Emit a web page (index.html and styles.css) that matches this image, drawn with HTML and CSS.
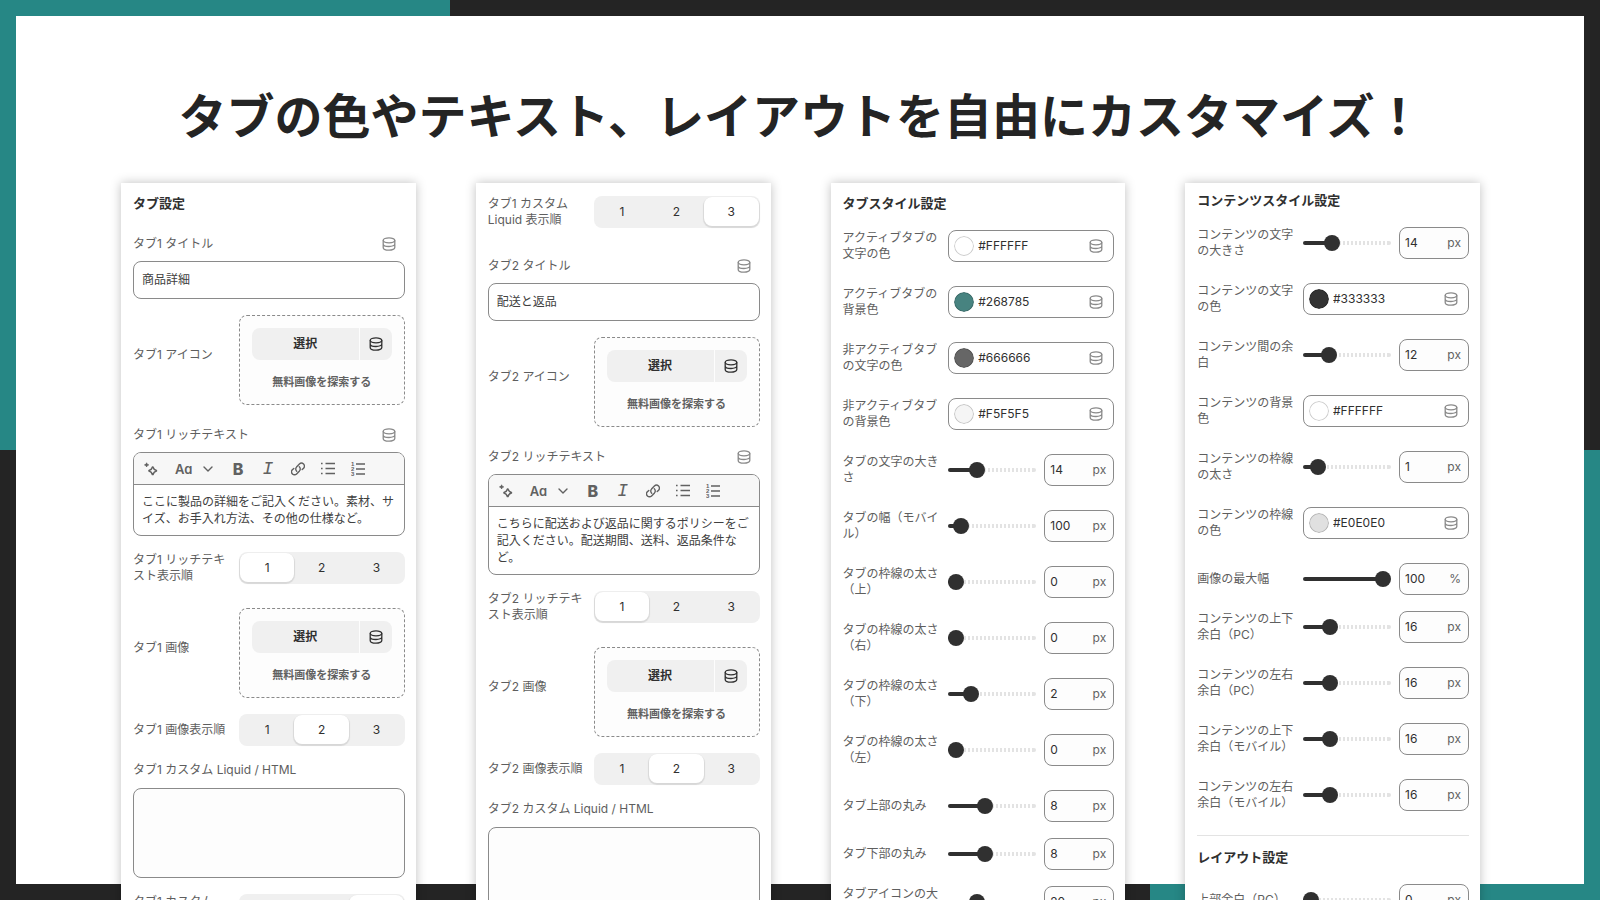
FILE: index.html
```html
<!DOCTYPE html>
<html lang="ja">
<head>
<meta charset="utf-8">
<meta name="viewport" content="width=device-width, initial-scale=1">
<title>タブの色やテキスト、レイアウトを自由にカスタマイズ！</title>
<link rel="stylesheet" href="styles.css">
</head>
<body>
<svg class="sprite" aria-hidden="true">
  <symbol id="db" viewBox="0 0 14 14"><g fill="none" stroke="currentColor" stroke-width="1.3"><ellipse cx="7" cy="3.3" rx="5.8" ry="2.5"/><path d="M1.2 3.300v7.200c0 1.500 2.500 2.700 5.800 2.700s5.800-1.200 5.800-2.700v-7.200M1.200 6.900c0 1.500 2.500 2.600 5.800 2.600s5.800-1.100 5.800-2.600"/></g></symbol>
  <symbol id="sparkle" viewBox="0 0 14 14"><path d="M9 5.100c.5 1.900 1.500 2.900 3.400 3.400v.6c-1.900.5-2.900 1.500-3.400 3.400h-.6c-.5-1.900-1.500-2.900-3.400-3.400v-.6c1.900-.5 2.900-1.500 3.400-3.400z" fill="none" stroke="currentColor" stroke-width="1.600" stroke-linejoin="round"/><path d="M2.600.8l.6 1.500 1.500.6-1.500.6-.6 1.500-.6-1.500-1.500-.6 1.500-.6z" fill="currentColor" stroke="currentColor" stroke-width=".8"/></symbol>
  <symbol id="chevron" viewBox="0 0 10 10"><path d="M1 3l4 4 4-4" fill="none" stroke="currentColor" stroke-width="1.400" stroke-linecap="round" stroke-linejoin="round"/></symbol>
  <symbol id="link" viewBox="0 0 14 14"><g fill="none" stroke="currentColor" stroke-width="1.400" stroke-linecap="round"><path d="M5.700 9.200a2.900 2.900 0 0 1-.2-4.100l2.900-3a2.900 2.900 0 0 1 4.200 4.100l-1.400 1.400"/><path d="M8.300 4.800a2.900 2.900 0 0 1 .2 4.100l-2.900 3a2.900 2.900 0 0 1-4.200-4.100l1.400-1.400"/></g></symbol>
  <symbol id="ul" viewBox="0 0 14 14"><path d="M4.500 1.500H14M4.500 6.500H14M4.500 11.500H14" stroke="currentColor" stroke-width="1.300"/><path d="M0 1.500h1.600M0 6.500h1.600M0 11.500h1.600" stroke="currentColor" stroke-width="1.500"/></symbol>
  <symbol id="ol" viewBox="0 0 14 16"><path d="M5 3H14M5 8H14M5 13H14" stroke="currentColor" stroke-width="1.400"/><g class="tiny"><text x="0" y="5">1</text><text x="0" y="10">2</text><text x="0" y="15">3</text></g></symbol>
</svg>
<main class="slide">
  <h1 class="slide-title">タブの色やテキスト、レイアウトを自由にカスタマイズ！</h1>
  <div class="panels">

    <section class="panel">
      <h2 class="heading">タブ設定</h2>
      <div class="field">
        <div class="field-head"><label for="t1">タブ1 タイトル</label><button class="ghost" aria-label="動的ソース"><svg class="icon"><use href="#db"/></svg></button></div>
        <input class="text" id="t1" value="商品詳細">
      </div>
      <div class="row media"><span class="label">タブ1 アイコン</span>
        <div class="picker"><div class="split"><button class="pick">選択</button><button class="source" aria-label="動的ソース"><svg class="icon"><use href="#db"/></svg></button></div><a class="explore" href="#">無料画像を探索する</a></div></div>
      <div class="field">
        <div class="field-head"><label for="r1">タブ1 リッチテキスト</label><button class="ghost" aria-label="動的ソース"><svg class="icon"><use href="#db"/></svg></button></div>
        <div class="editor">
          <div class="toolbar"><button class="tool" aria-label="自動生成"><svg class="icon"><use href="#sparkle"/></svg></button><button class="tool format">Aa<svg class="chevron"><use href="#chevron"/></svg></button><button class="tool bold">B</button><button class="tool italic">I</button><button class="tool" aria-label="リンク"><svg class="icon"><use href="#link"/></svg></button><button class="tool" aria-label="箇条書き"><svg class="icon"><use href="#ul"/></svg></button><button class="tool" aria-label="番号付きリスト"><svg class="icon tall-icon"><use href="#ol"/></svg></button></div>
          <textarea class="rich" id="r1" rows="2">ここに製品の詳細をご記入ください。素材、サイズ、お手入れ方法、その他の仕様など。</textarea>
        </div>
      </div>
      <div class="row tall"><span class="label">タブ1 リッチテキスト表示順</span>
        <div class="segments"><button class="segment active">1</button><button class="segment">2</button><button class="segment">3</button></div></div>
      <div class="row media"><span class="label">タブ1 画像</span>
        <div class="picker"><div class="split"><button class="pick">選択</button><button class="source" aria-label="動的ソース"><svg class="icon"><use href="#db"/></svg></button></div><a class="explore" href="#">無料画像を探索する</a></div></div>
      <div class="row"><span class="label">タブ1 画像表示順</span>
        <div class="segments"><button class="segment">1</button><button class="segment active">2</button><button class="segment">3</button></div></div>
      <div class="field"><label class="code-label" for="c1">タブ1 カスタム Liquid / HTML</label><textarea class="code" id="c1"></textarea></div>
      <div class="row tall"><span class="label">タブ1 カスタム Liquid 表示順</span>
        <div class="segments"><button class="segment">1</button><button class="segment">2</button><button class="segment active">3</button></div></div>
    </section>

    <section class="panel panel-rows">
      <div class="row tall"><span class="label">タブ1 カスタム Liquid 表示順</span>
        <div class="segments"><button class="segment">1</button><button class="segment">2</button><button class="segment active">3</button></div></div>
      <div class="field">
        <div class="field-head"><label for="t2">タブ2 タイトル</label><button class="ghost" aria-label="動的ソース"><svg class="icon"><use href="#db"/></svg></button></div>
        <input class="text" id="t2" value="配送と返品">
      </div>
      <div class="row media"><span class="label">タブ2 アイコン</span>
        <div class="picker"><div class="split"><button class="pick">選択</button><button class="source" aria-label="動的ソース"><svg class="icon"><use href="#db"/></svg></button></div><a class="explore" href="#">無料画像を探索する</a></div></div>
      <div class="field">
        <div class="field-head"><label for="r2">タブ2 リッチテキスト</label><button class="ghost" aria-label="動的ソース"><svg class="icon"><use href="#db"/></svg></button></div>
        <div class="editor">
          <div class="toolbar"><button class="tool" aria-label="自動生成"><svg class="icon"><use href="#sparkle"/></svg></button><button class="tool format">Aa<svg class="chevron"><use href="#chevron"/></svg></button><button class="tool bold">B</button><button class="tool italic">I</button><button class="tool" aria-label="リンク"><svg class="icon"><use href="#link"/></svg></button><button class="tool" aria-label="箇条書き"><svg class="icon"><use href="#ul"/></svg></button><button class="tool" aria-label="番号付きリスト"><svg class="icon tall-icon"><use href="#ol"/></svg></button></div>
          <textarea class="rich" id="r2" rows="3">こちらに配送および返品に関するポリシーをご記入ください。配送期間、送料、返品条件など。</textarea>
        </div>
      </div>
      <div class="row tall"><span class="label">タブ2 リッチテキスト表示順</span>
        <div class="segments"><button class="segment active">1</button><button class="segment">2</button><button class="segment">3</button></div></div>
      <div class="row media"><span class="label">タブ2 画像</span>
        <div class="picker"><div class="split"><button class="pick">選択</button><button class="source" aria-label="動的ソース"><svg class="icon"><use href="#db"/></svg></button></div><a class="explore" href="#">無料画像を探索する</a></div></div>
      <div class="row"><span class="label">タブ2 画像表示順</span>
        <div class="segments"><button class="segment">1</button><button class="segment active">2</button><button class="segment">3</button></div></div>
      <div class="field"><label class="code-label" for="c2">タブ2 カスタム Liquid / HTML</label><textarea class="code" id="c2"></textarea></div>
    </section>

    <section class="panel">
      <h2 class="heading">タブスタイル設定</h2>
      <div class="row tall"><label class="label" for="k1">アクティブタブの文字の色</label>
        <div class="color"><input type="color" class="swatch" value="#ffffff" aria-label="色を選択"><input class="hex" id="k1" value="#FFFFFF"><button class="ghost" aria-label="動的ソース"><svg class="icon"><use href="#db"/></svg></button></div></div>
      <div class="row tall"><label class="label" for="k2">アクティブタブの背景色</label>
        <div class="color"><input type="color" class="swatch" value="#478380" aria-label="色を選択"><input class="hex" id="k2" value="#268785"><button class="ghost" aria-label="動的ソース"><svg class="icon"><use href="#db"/></svg></button></div></div>
      <div class="row tall"><label class="label" for="k3">非アクティブタブの文字の色</label>
        <div class="color"><input type="color" class="swatch" value="#666666" aria-label="色を選択"><input class="hex" id="k3" value="#666666"><button class="ghost" aria-label="動的ソース"><svg class="icon"><use href="#db"/></svg></button></div></div>
      <div class="row tall"><label class="label" for="k4">非アクティブタブの背景色</label>
        <div class="color"><input type="color" class="swatch" value="#f5f5f5" aria-label="色を選択"><input class="hex" id="k4" value="#F5F5F5"><button class="ghost" aria-label="動的ソース"><svg class="icon"><use href="#db"/></svg></button></div></div>
      <div class="row tall"><label class="label" for="n1">タブの文字の大きさ</label>
        <div class="slider"><input type="range" class="range" min="10" max="24" value="14" style="--fill:.286" aria-label="タブの文字の大きさ"><div class="number"><input id="n1" value="14"><span>px</span></div></div></div>
      <div class="row tall"><label class="label" for="n2">タブの幅（モバイル）</label>
        <div class="slider"><input type="range" class="range" min="80" max="360" value="100" style="--fill:.071" aria-label="タブの幅（モバイル）"><div class="number"><input id="n2" value="100"><span>px</span></div></div></div>
      <div class="row tall"><label class="label" for="n3">タブの枠線の太さ（上）</label>
        <div class="slider"><input type="range" class="range" max="10" value="0" style="--fill:0" aria-label="タブの枠線の太さ（上）"><div class="number"><input id="n3" value="0"><span>px</span></div></div></div>
      <div class="row tall"><label class="label" for="n4">タブの枠線の太さ（右）</label>
        <div class="slider"><input type="range" class="range" max="10" value="0" style="--fill:0" aria-label="タブの枠線の太さ（右）"><div class="number"><input id="n4" value="0"><span>px</span></div></div></div>
      <div class="row tall"><label class="label" for="n5">タブの枠線の太さ（下）</label>
        <div class="slider"><input type="range" class="range" max="10" value="2" style="--fill:.2" aria-label="タブの枠線の太さ（下）"><div class="number"><input id="n5" value="2"><span>px</span></div></div></div>
      <div class="row tall"><label class="label" for="n6">タブの枠線の太さ（左）</label>
        <div class="slider"><input type="range" class="range" max="10" value="0" style="--fill:0" aria-label="タブの枠線の太さ（左）"><div class="number"><input id="n6" value="0"><span>px</span></div></div></div>
      <div class="row"><label class="label" for="n7">タブ上部の丸み</label>
        <div class="slider"><input type="range" class="range" max="20" value="8" style="--fill:.4" aria-label="タブ上部の丸み"><div class="number"><input id="n7" value="8"><span>px</span></div></div></div>
      <div class="row"><label class="label" for="n8">タブ下部の丸み</label>
        <div class="slider"><input type="range" class="range" max="20" value="8" style="--fill:.4" aria-label="タブ下部の丸み"><div class="number"><input id="n8" value="8"><span>px</span></div></div></div>
      <div class="row tall"><label class="label" for="n9">タブアイコンの大きさ</label>
        <div class="slider"><input type="range" class="range" min="12" max="40" value="20" style="--fill:.286" aria-label="タブアイコンの大きさ"><div class="number"><input id="n9" value="20"><span>px</span></div></div></div>
    </section>

    <section class="panel panel-content">
      <h2 class="heading">コンテンツスタイル設定</h2>
      <div class="row tall"><label class="label" for="m1">コンテンツの文字の大きさ</label>
        <div class="slider"><input type="range" class="range" min="10" max="24" value="14" style="--fill:.286" aria-label="コンテンツの文字の大きさ"><div class="number"><input id="m1" value="14"><span>px</span></div></div></div>
      <div class="row tall"><label class="label" for="m2">コンテンツの文字の色</label>
        <div class="color"><input type="color" class="swatch" value="#333333" aria-label="色を選択"><input class="hex" id="m2" value="#333333"><button class="ghost" aria-label="動的ソース"><svg class="icon"><use href="#db"/></svg></button></div></div>
      <div class="row tall"><label class="label" for="m3">コンテンツ間の余白</label>
        <div class="slider"><input type="range" class="range" max="48" value="12" style="--fill:.25" aria-label="コンテンツ間の余白"><div class="number"><input id="m3" value="12"><span>px</span></div></div></div>
      <div class="row tall"><label class="label" for="m4">コンテンツの背景色</label>
        <div class="color"><input type="color" class="swatch" value="#ffffff" aria-label="色を選択"><input class="hex" id="m4" value="#FFFFFF"><button class="ghost" aria-label="動的ソース"><svg class="icon"><use href="#db"/></svg></button></div></div>
      <div class="row tall"><label class="label" for="m5">コンテンツの枠線の太さ</label>
        <div class="slider"><input type="range" class="range" max="10" value="1" style="--fill:.1" aria-label="コンテンツの枠線の太さ"><div class="number"><input id="m5" value="1"><span>px</span></div></div></div>
      <div class="row tall"><label class="label" for="m6">コンテンツの枠線の色</label>
        <div class="color"><input type="color" class="swatch" value="#e0e0e0" aria-label="色を選択"><input class="hex" id="m6" value="#E0E0E0"><button class="ghost" aria-label="動的ソース"><svg class="icon"><use href="#db"/></svg></button></div></div>
      <div class="row"><label class="label" for="m7">画像の最大幅</label>
        <div class="slider"><input type="range" class="range" max="100" value="100" style="--fill:1" aria-label="画像の最大幅"><div class="number"><input id="m7" value="100"><span>%</span></div></div></div>
      <div class="row tall"><label class="label" for="m8">コンテンツの上下余白（PC）</label>
        <div class="slider"><input type="range" class="range" max="60" value="16" style="--fill:.267" aria-label="コンテンツの上下余白（PC）"><div class="number"><input id="m8" value="16"><span>px</span></div></div></div>
      <div class="row tall"><label class="label" for="m9">コンテンツの左右余白（PC）</label>
        <div class="slider"><input type="range" class="range" max="60" value="16" style="--fill:.267" aria-label="コンテンツの左右余白（PC）"><div class="number"><input id="m9" value="16"><span>px</span></div></div></div>
      <div class="row tall"><label class="label" for="m10">コンテンツの上下余白（モバイル）</label>
        <div class="slider"><input type="range" class="range" max="60" value="16" style="--fill:.267" aria-label="コンテンツの上下余白（モバイル）"><div class="number"><input id="m10" value="16"><span>px</span></div></div></div>
      <div class="row tall"><label class="label" for="m11">コンテンツの左右余白（モバイル）</label>
        <div class="slider"><input type="range" class="range" max="60" value="16" style="--fill:.267" aria-label="コンテンツの左右余白（モバイル）"><div class="number"><input id="m11" value="16"><span>px</span></div></div></div>
      <h2 class="heading divided">レイアウト設定</h2>
      <div class="row"><label class="label" for="m12">上部余白（PC）</label>
        <div class="slider"><input type="range" class="range" max="100" value="0" style="--fill:0" aria-label="上部余白（PC）"><div class="number"><input id="m12" value="0"><span>px</span></div></div></div>
    </section>

  </div>
</main>
</body>
</html>
```
FILE: styles.css
```css
:root {
  --teal: #268785;
  --dark: #242424;
  --ink: #303030;
  --muted: #5e5e5e;
  --line: #8a8a8a;
  --soft: #f0f0f0;
}

* { box-sizing: border-box; }

body {
  margin: 0;
  height: 100vh;
  overflow: hidden;
  color: var(--ink);
  font-family: Inter, "Noto Sans CJK JP", sans-serif;
  font-size: 12px;
  line-height: 16px;
}

button, input, textarea {
  margin: 0;
  padding: 0;
  border: 0;
  background: none;
  color: inherit;
  font: inherit;
}

.sprite { display: none; }
.tiny { font: 700 6px "Liberation Sans", sans-serif; fill: currentColor; }

/* White sheet over a frame with two teal corners */
.slide {
  height: 100vh;
  overflow: hidden;
  padding: 77px 120px 0 121px;
  background:
    linear-gradient(#fff, #fff) 16px 16px / calc(100% - 32px) calc(100% - 32px) no-repeat,
    linear-gradient(var(--teal), var(--teal)) 0 0 / 450px 450px no-repeat,
    linear-gradient(var(--teal), var(--teal)) 100% 100% / 450px 450px no-repeat,
    var(--dark);
}

.slide-title {
  margin: 0 0 34px;
  color: #242424;
  font: 700 48px/72px "Noto Sans CJK JP", sans-serif;
  text-align: center;
  white-space: nowrap;
}

.panels {
  display: grid;
  grid-template-columns: repeat(4, minmax(0, 1fr));
  gap: 60px;
}

.panel {
  display: flex;
  flex-direction: column;
  gap: 16px;
  min-height: 760px;
  padding: 11px 11px 16px 12px;
  background: #fff;
  box-shadow: 0 0 10px rgba(0, 0, 0, .25);
}
.panel-rows { padding-top: 13px; }
.panel-content { padding-top: 8px; }

.heading { margin: 0; padding-bottom: 2px; font-size: 13px; font-weight: 700; line-height: 18px; }
.heading.divided { padding-top: 12px; border-top: 1px solid #e3e3e3; }

.row {
  display: grid;
  grid-template-columns: minmax(0, 1fr) 166px;
  gap: 6px;
  align-items: center;
}
.row.tall { padding-bottom: 8px; }
.row.media .label { padding-bottom: 11px; }
.label, .field-head label, .code-label { color: var(--muted); }

.field { display: flex; flex-direction: column; }
.field-head {
  display: flex;
  align-items: center;
  justify-content: space-between;
  height: 28px;
  margin-bottom: 3px;
  padding-right: 9px;
}
.code-label { margin-bottom: 10px; }

.icon { display: block; width: 14px; height: 14px; }
.tall-icon { height: 16px; }
.ghost { color: var(--line); }

.text {
  height: 38px;
  padding: 0 8px 3px;
  border: 1px solid var(--line);
  border-radius: 8px;
}
.text, .rich { color: #404040; }
.code {
  height: 90px;
  border: 1px solid var(--line);
  border-radius: 8px;
  background: #fdfdfd;
  resize: none;
}

.picker {
  display: flex;
  flex-direction: column;
  align-items: center;
  gap: 14px;
  height: 90px;
  padding: 12px;
  border: 1px dashed var(--line);
  border-radius: 8px;
  background: #fdfdfd;
}
.split { display: grid; grid-template-columns: 1fr 32px; gap: 1px; width: 100%; height: 32px; }
.pick { border-radius: 8px 0 0 8px; background: var(--soft); font-weight: 700; }
.source { display: grid; place-items: center; border-radius: 0 8px 8px 0; background: var(--soft); }
.explore { color: #616161; font-size: 11px; font-weight: 700; text-decoration: none; }

.editor { overflow: hidden; border: 1px solid var(--line); border-radius: 8px; }
.toolbar {
  display: flex;
  gap: 2px;
  height: 32px;
  padding: 0 3px;
  border-bottom: 1px solid var(--line);
  background: #f7f7f7;
  color: #616161;
}
.tool { display: grid; place-items: center; width: 28px; height: 31px; }
.tool.format {
  display: flex;
  align-items: center;
  justify-content: space-between;
  width: 55px;
  padding: 0 9px 0 8px;
  font-size: 13px;
  font-weight: 600;
  font-feature-settings: "cv11";
}
.chevron { width: 10px; height: 10px; }
.tool.bold { font-size: 16px; font-weight: 800; }
.tool.italic { font: italic 400 18px "Liberation Mono", monospace; }
.rich {
  display: block;
  width: 100%;
  padding: 8px;
  overflow: hidden;
  line-height: 17px;
  resize: none;
}

.segments {
  display: grid;
  grid-template-columns: repeat(3, 1fr);
  height: 32px;
  padding: 1px;
  border-radius: 8px;
  background: var(--soft);
}
.segment { border-radius: 8px; }
.segment.active { margin-bottom: 1px; background: #fff; box-shadow: 0 1px 1px 1px rgba(0, 0, 0, .1); }

.color {
  display: flex;
  align-items: center;
  height: 32px;
  padding: 0 10px 0 5px;
  border: 1px solid var(--line);
  border-radius: 8px;
}
.swatch {
  flex: none;
  width: 20px;
  height: 20px;
  border-radius: 50%;
  overflow: hidden;
  appearance: none;
}
.swatch::-webkit-color-swatch-wrapper { padding: 0; }
.swatch::-webkit-color-swatch { border: 1px solid rgba(0, 0, 0, .2); border-radius: 50%; }
.hex { flex: 1; min-width: 0; padding-left: 4px; }

.slider { display: flex; align-items: center; gap: 8px; }
.range {
  flex: 1;
  min-width: 0;
  height: 16px;
  appearance: none;
  background: none;
}
.range::-webkit-slider-runnable-track {
  height: 4px;
  border-radius: 2px;
  background:
    linear-gradient(var(--ink), var(--ink)) 0 0 / calc(8px + var(--fill) * (100% - 16px)) 100% no-repeat,
    linear-gradient(#e3e3e3, #e3e3e3) 100% 0 / 4px 100% no-repeat,
    repeating-linear-gradient(90deg, #e3e3e3 0 2px, #fff 2px 4px);
}
.range::-webkit-slider-thumb {
  width: 16px;
  height: 16px;
  margin-top: -6px;
  border-radius: 50%;
  background: var(--ink);
  appearance: none;
}

.number {
  display: flex;
  align-items: center;
  width: 70px;
  height: 32px;
  padding: 0 7px 0 5px;
  border: 1px solid var(--line);
  border-radius: 8px;
  background: #fdfdfd;
}
.number input { flex: 1; min-width: 0; }
.number span { color: #616161; }
```
